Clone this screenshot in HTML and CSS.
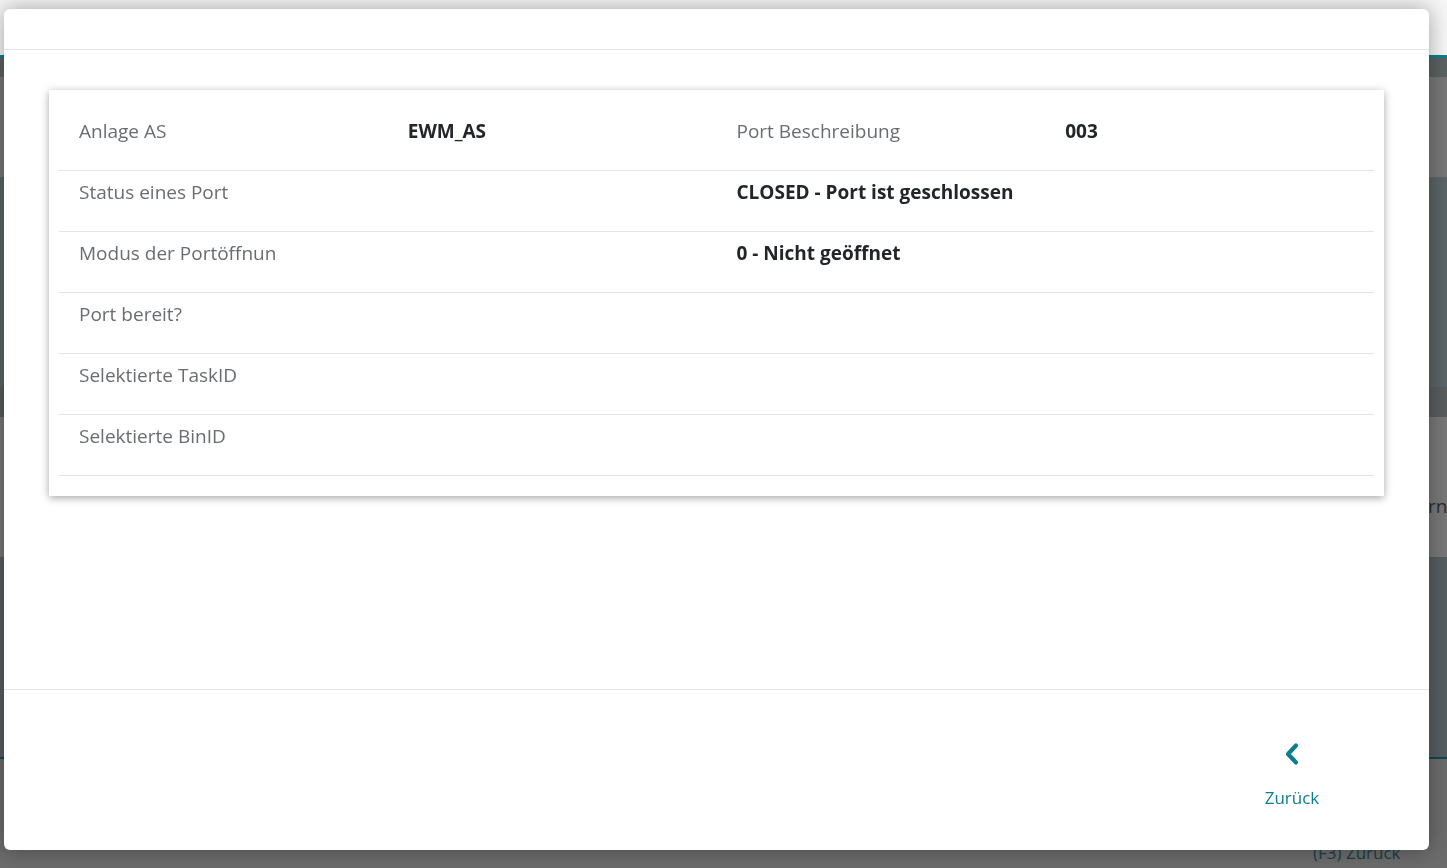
FILE: index.html
```html
<!DOCTYPE html>
<html lang="de">
<head>
  <meta charset="UTF-8" />
  <title>Port Details</title>
  <link rel="stylesheet" href="styles.css">
</head>
<body>

  <div class="page">
    <div class="page-header"></div>
    <div class="band band-toolbar"></div>
    <div class="band band-a"></div>
    <div class="band band-b"></div>
    <div class="band band-c"></div>
    <div class="band band-d"><span class="bg-text">rn</span></div>
    <div class="band band-e"></div>
    <div class="band band-f"><span class="bg-link">(F3) Zurück</span></div>
  </div>

  <div class="modal">
    <div class="modal-header"></div>

    <div class="modal-body">
      <div class="card">
        <div class="row">
          <div class="cell label">Anlage AS</div>
          <div class="cell value">EWM_AS</div>
          <div class="cell label">Port Beschreibung</div>
          <div class="cell value">003</div>
        </div>
        <div class="row">
          <div class="cell label span2">Status eines Port</div>
          <div class="cell value span2">CLOSED - Port ist geschlossen</div>
        </div>
        <div class="row">
          <div class="cell label span2">Modus der Portöffnun</div>
          <div class="cell value span2">0 - Nicht geöffnet</div>
        </div>
        <div class="row">
          <div class="cell label span2">Port bereit?</div>
          <div class="cell value span2"></div>
        </div>
        <div class="row">
          <div class="cell label span2">Selektierte TaskID</div>
          <div class="cell value span2"></div>
        </div>
        <div class="row">
          <div class="cell label span2">Selektierte BinID</div>
          <div class="cell value span2"></div>
        </div>
      </div>
    </div>

    <div class="modal-footer">
      <button class="back-button">
        <svg width="16" height="24" viewBox="0 0 16 24">
          <path d="M12 3.5 L4 12 L12 20.5" fill="none" stroke="#0a7e8c" stroke-width="4.2" stroke-linecap="round" stroke-linejoin="round"/>
        </svg>
        <span>Zurück</span>
      </button>
    </div>
  </div>

</body>
</html>
```

FILE: styles.css
```css
* {
  margin: 0;
  padding: 0;
  box-sizing: border-box;
}

body {
  font-family: 'Open Sans', 'Noto Sans', sans-serif;
  background: #6e6e6e;
  overflow: hidden;
  height: 868px;
}

/* dimmed page behind the dialog */
.page {
  display: flex;
  flex-direction: column;
  height: 868px;
}

.page-header {
  height: 58px;
  background: #f6f6f6;
  border-bottom: 3px solid #0b808d;
  flex: none;
}

.band {
  flex: none;
  position: relative;
}

.band-toolbar {
  height: 19px;
  background: #5c6161;
}

.band-a {
  height: 100px;
  background: #777777;
}

.band-b {
  height: 210px;
  background: #5b6466;
}

.band-c {
  height: 30px;
  background: #595d5e;
}

.band-d {
  height: 140px;
  background: #787878;
}

.band-e {
  height: 202px;
  background: #575e61;
  border-bottom: 2px solid #0d4c52;
}

.band-f {
  flex: 1;
  background: #6c6c6c;
}

.bg-text {
  position: absolute;
  left: 1428px;
  top: 76px;
  font-size: 19px;
  color: #2a2e30;
}

.bg-link {
  position: absolute;
  left: 1313px;
  top: 82px;
  font-size: 17px;
  color: #1b3e45;
}

/* dialog */
.modal {
  position: fixed;
  left: 4px;
  top: 9px;
  width: 1425px;
  height: 841px;
  background: #fff;
  border-radius: 6px;
  box-shadow: 0 0 22px rgba(0, 0, 0, 0.35);
  display: flex;
  flex-direction: column;
  overflow: hidden;
}

.modal-header {
  height: 41px;
  border-bottom: 1px solid #e5e5e5;
  flex: none;
}

.modal-body {
  flex: 1;
  padding: 40px 45px;
}

.card {
  background: #fff;
  padding: 20px 10px;
  box-shadow: 0 2px 8px rgba(0, 0, 0, 0.35);
}

.row {
  display: grid;
  grid-template-columns: repeat(4, 1fr);
  height: 61px;
  border-bottom: 1px solid #e4e4e8;
}

.cell {
  padding: 8px 20px 0;
  font-size: 19px;
  line-height: 26px;
}

.span2 {
  grid-column: span 2;
}

.label {
  color: #6a6d70;
}

.value {
  color: #222629;
  font-weight: 700;
}

.modal-footer {
  height: 161px;
  border-top: 1px solid #e5e5e5;
  flex: none;
  display: flex;
  justify-content: flex-end;
  align-items: center;
  padding-right: 85px;
}

.back-button {
  width: 104px;
  background: none;
  border: none;
  font-family: inherit;
  display: flex;
  flex-direction: column;
  align-items: center;
  gap: 20px;
  color: #0a7e8c;
  font-size: 17px;
  cursor: pointer;
  margin-top: 10px;
}
```
